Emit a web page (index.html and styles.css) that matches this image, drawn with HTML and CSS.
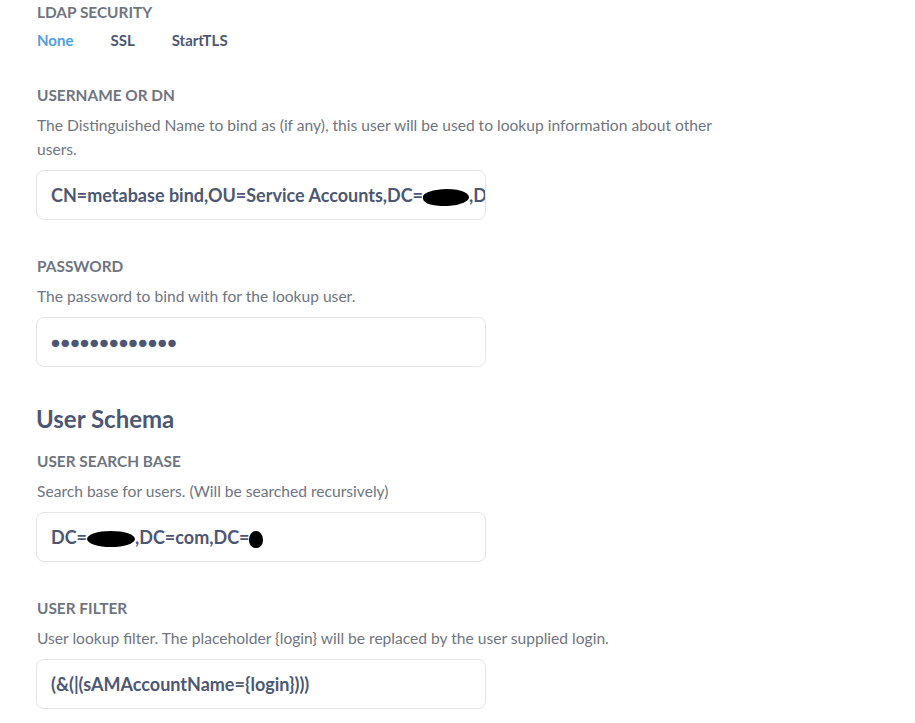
FILE: index.html
```html
<!DOCTYPE html>
<html>
<head>
    <title>LDAP Settings</title>
    <link rel="stylesheet" href="styles.css">
</head>
<body>
    <div class="settings">
        <div class="field field-security">
            <div class="field-label">LDAP Security</div>
            <div class="segmented">
                <span class="segment active">None</span>
                <span class="segment">SSL</span>
                <span class="segment">StartTLS</span>
            </div>
        </div>

        <div class="field">
            <div class="field-label">Username or DN</div>
            <p class="field-description">The Distinguished Name to bind as (if any), this user will be used to lookup information about other users.</p>
            <div class="input"><span class="input-value">CN=metabase bind,OU=Service Accounts,DC=<span class="redact redact-a"></span>,DC=com,DC=xx</span></div>
        </div>

        <div class="field">
            <div class="field-label">Password</div>
            <p class="field-description">The password to bind with for the lookup user.</p>
            <div class="input"><span class="input-value password">&#9679;&#9679;&#9679;&#9679;&#9679;&#9679;&#9679;&#9679;&#9679;&#9679;&#9679;&#9679;&#9679;</span></div>
        </div>

        <h2 class="section-title">User Schema</h2>

        <div class="field">
            <div class="field-label">User Search Base</div>
            <p class="field-description">Search base for users. (Will be searched recursively)</p>
            <div class="input"><span class="input-value">DC=<span class="redact redact-b"></span>,DC=com,DC=<span class="redact redact-c"></span></span></div>
        </div>

        <div class="field">
            <div class="field-label">User Filter</div>
            <p class="field-description">User lookup filter. The placeholder {login} will be replaced by the user supplied login.</p>
            <div class="input"><span class="input-value">(&amp;(|(sAMAccountName={login})))</span></div>
        </div>
    </div>
</body>
</html>
```

FILE: styles.css
```css
* {
    margin: 0;
    padding: 0;
    box-sizing: border-box;
}

body {
    font-family: 'Lato', 'Liberation Sans', sans-serif;
    background: #fff;
    color: #4c5773;
    padding: 2px 0 0 36px;
}

.settings {
    width: 700px;
}

.field {
    margin-bottom: 36px;
}

.field-security {
    margin-bottom: 35px;
}

.field-label {
    font-size: 15.4px;
    line-height: 20px;
    font-weight: 700;
    color: #6f7580;
    text-transform: uppercase;
    margin-bottom: 8px;
    padding-left: 1px;
}

.field-description {
    font-size: 15.6px;
    line-height: 24px;
    color: #6f7580;
    margin-bottom: 9px;
    padding-left: 1px;
}

.segmented {
    display: flex;
    gap: 37px;
    font-size: 15px;
    line-height: 20px;
    font-weight: 700;
    padding-left: 1px;
}

.segment.active {
    color: #509ee3;
}

.input {
    width: 450px;
    height: 50px;
    border: 1px solid #e2e4e8;
    border-radius: 8px;
    padding: 0 14px;
    display: flex;
    align-items: center;
    overflow: hidden;
    white-space: nowrap;
}

.input-value {
    font-size: 18px;
    font-weight: 700;
    color: #4c5773;
}

.password {
    font-size: 15px;
    letter-spacing: 0.7px;
}

.section-title {
    font-size: 24px;
    line-height: 32px;
    font-weight: 700;
    color: #4c5773;
    margin: 0 0 16px;
}

/* scribbled-out values */
.redact {
    display: inline-block;
    background: #000;
    vertical-align: middle;
}

.redact-a {
    width: 46px;
    height: 17px;
    border-radius: 40% 60% 45% 55%;
    transform: rotate(-4deg);
}

.redact-b {
    width: 48px;
    height: 16px;
    border-radius: 50%;
}

.redact-c {
    width: 14px;
    height: 17px;
    border-radius: 50% 50% 45% 45%;
}
```
